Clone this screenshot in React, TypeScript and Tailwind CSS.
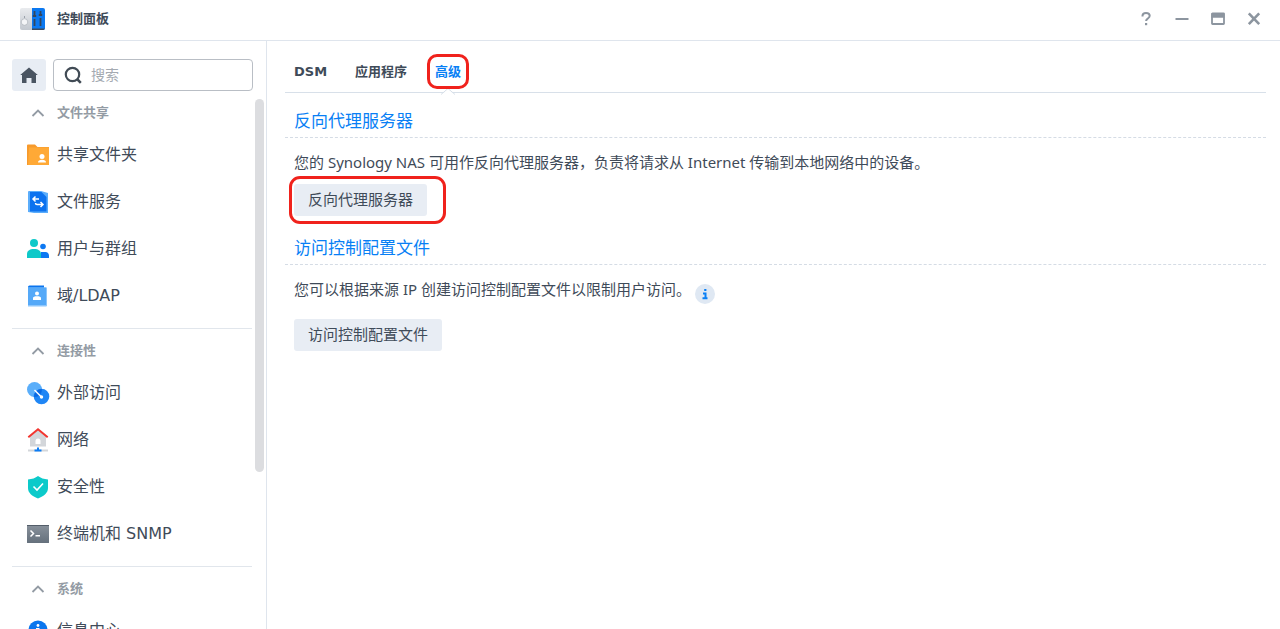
import type { ReactNode } from "react";

const LogoIcon = () => (
  <svg width="26" height="22" viewBox="0 0 26 22" aria-hidden="true">
    <defs>
      <linearGradient id="logoGray" x1="0" y1="0" x2="0" y2="1">
        <stop offset="0" stopColor="#e9ebee" />
        <stop offset="1" stopColor="#c3c8cf" />
      </linearGradient>
    </defs>
    <rect width="14" height="22" rx="2" fill="url(#logoGray)" />
    <path d="M12 0h11a2 2 0 0 1 2 2v18a2 2 0 0 1-2 2H12z" fill="#0b78f0" />
    <path d="M12 20.500h13a2 2 0 0 1-2 1.500H12z" fill="#3d4a5c" />
    <circle cx="4.500" cy="14" r="3.300" fill="#f4f5f7" stroke="#aab0b8" strokeWidth="0.700" />
    <path d="M4.500 8v2" stroke="#9aa1aa" />
    <path d="M14.500 3v5M14.500 11v7M20.500 3v3M20.500 10v8" stroke="#33465e" strokeWidth="1.800" />
    <path d="M12.800 8h3.400M18.800 7h3.400" stroke="#33465e" strokeWidth="1.800" />
  </svg>
);

const FolderIcon = () => (
  <svg width="24" height="24" viewBox="0 0 24 24" aria-hidden="true">
    <path d="M1 2.500A1 1 0 0 1 2 1.500H9L11.500 4H23v18H1z" fill="#f79a2c" />
    <path d="M3 4.500h20v17.500H2z" fill="#ffa936" />
    <circle cx="16" cy="13.500" r="2.500" fill="#fff" />
    <path d="M12 19.500c0-2 1.500-2.800 4-2.800s4 .8 4 2.800z" fill="#fff" />
  </svg>
);

const FileServiceIcon = () => (
  <svg width="24" height="24" viewBox="0 0 24 24" aria-hidden="true">
    <path d="M2 2A1 1 0 0 1 3 1H15l7 2v20H8l-6-1z" fill="#5badfb" />
    <path d="M4 2h11.500l5 5v14.500H4z" fill="#0c72ef" />
    <path
      d="M13 9H7.500M9.500 6.500L7 9l2.500 2.500M11 14.500h6M14.500 12l2.500 2.500-2.500 2.500M11 14.500c-.8 0-1.500-.5-1.500-1.500"
      fill="none"
      stroke="#fff"
      strokeWidth="1.500"
    />
  </svg>
);

const UsersIcon = () => (
  <svg width="24" height="24" viewBox="0 0 24 24" aria-hidden="true">
    <circle cx="8" cy="6" r="4" fill="#0ec9c9" />
    <circle cx="17" cy="9.500" r="2.800" fill="#0c78f2" />
    <path d="M1 21v-4c0-3 2.500-5 7-5s7 2 7 5v4z" fill="#0ec9c9" />
    <path d="M15 15v6h8v-2c0-2.500-1.500-4-3.500-4z" fill="#0c78f2" />
  </svg>
);

const LdapIcon = () => (
  <svg width="24" height="24" viewBox="0 0 24 24" aria-hidden="true">
    <path d="M2 3A1.500 1.500 0 0 1 3.500 1.500H18v3H2z" fill="#0b74ee" />
    <path d="M2 3.500h19V21.500a1 1 0 0 1-1 1H2z" fill="#8dc6fb" />
    <path d="M2 3.500h18v17.500H2z" fill="#55a9f8" />
    <circle cx="11" cy="9.500" r="2" fill="#fff" />
    <path d="M7 16v-2c0-1.200 1.500-1.700 4-1.700s4 .5 4 1.700v2z" fill="#fff" />
  </svg>
);

const ExternalIcon = () => (
  <svg width="24" height="24" viewBox="0 0 24 24" aria-hidden="true">
    <circle cx="8.500" cy="8.500" r="7.500" fill="#5aaefa" />
    <circle cx="15.500" cy="15.500" r="7.800" fill="#1f86f5" />
    <path d="M8.500 16a7.500 7.500 0 0 0 7.500-8 8 8 0 0 0-8 8z" fill="#0969e4" />
    <path d="M8.500 9l7 7" stroke="#fff" strokeWidth="1.500" />
    <circle cx="15.500" cy="16" r="1.700" fill="#fff" />
  </svg>
);

const NetworkIcon = () => (
  <svg width="24" height="24" viewBox="0 0 24 24" aria-hidden="true">
    <path d="M4 8l8-6 8 6v10.500H4z" fill="#d3d6da" />
    <path d="M2.300 9.300L12 1.300l9.700 8" fill="none" stroke="#f2352f" strokeWidth="2" />
    <path d="M9.500 16v-3a2.500 2.500 0 0 1 5 0v3z" fill="#fff" />
    <path d="M2 22.500h20" stroke="#d3d6da" strokeWidth="2" />
    <path d="M12 19.500v4M8.500 22.500h7" stroke="#0b7cf5" strokeWidth="2" />
  </svg>
);

const SecurityIcon = () => (
  <svg width="24" height="24" viewBox="0 0 24 24" aria-hidden="true">
    <path d="M12 1c2.500 2 6 3.200 10 3.500V13c0 5-4 8-10 10.500C6 21 2 18 2 13V4.500C6 4.200 9.500 3 12 1z" fill="#0ccaca" />
    <path d="M7.500 11.500l3.500 3.500 6-6.500" fill="none" stroke="#fff" strokeWidth="1.600" />
  </svg>
);

const TerminalIcon = () => (
  <svg width="24" height="24" viewBox="0 0 24 24" aria-hidden="true">
    <defs>
      <linearGradient id="termGray" x1="0" y1="0" x2="0" y2="1">
        <stop offset="0" stopColor="#88919b" />
        <stop offset="1" stopColor="#65707c" />
      </linearGradient>
    </defs>
    <rect x="1" y="3" width="22" height="18" rx="0.500" fill="url(#termGray)" />
    <path d="M1 3.500h22" stroke="#535d69" />
    <path d="M4.500 8.500l3 3-3 3M9.500 13.800h4.500" fill="none" stroke="#fff" strokeWidth="1.500" />
  </svg>
);

const InfoCenterIcon = () => (
  <svg width="24" height="24" viewBox="0 0 24 24" aria-hidden="true">
    <circle cx="12" cy="11" r="9.500" fill="#0b76ee" />
    <path d="M10 10h2.500v6.500M9.500 16h5.500" fill="none" stroke="#fff" strokeWidth="2" />
    <circle cx="12" cy="6.500" r="1.400" fill="#fff" />
  </svg>
);

type Item = { label: string; icon: ReactNode };

const groups: { title: string; items: Item[] }[] = [
  {
    title: "文件共享",
    items: [
      { label: "共享文件夹", icon: <FolderIcon /> },
      { label: "文件服务", icon: <FileServiceIcon /> },
      { label: "用户与群组", icon: <UsersIcon /> },
      { label: "域/LDAP", icon: <LdapIcon /> },
    ],
  },
  {
    title: "连接性",
    items: [
      { label: "外部访问", icon: <ExternalIcon /> },
      { label: "网络", icon: <NetworkIcon /> },
      { label: "安全性", icon: <SecurityIcon /> },
      { label: "终端机和 SNMP", icon: <TerminalIcon /> },
    ],
  },
  {
    title: "系统",
    items: [{ label: "信息中心", icon: <InfoCenterIcon /> }],
  },
];

const Header = () => (
  <header className="flex h-[41px] shrink-0 items-center border-b border-[#dfe5ed] pl-5 pr-4 pb-[2px]">
    <LogoIcon />
    <h1 className="ml-[11px] text-[13px] font-bold">控制面板</h1>
    <div className="ml-auto flex gap-4 text-[#8c959f]">
      <button type="button" aria-label="帮助" className="flex size-5 items-center justify-center">
        <svg width="16" height="16" viewBox="0 0 16 16" fill="none" stroke="currentColor" strokeWidth="2">
          <path d="M4.500 5.500V4.800C4.500 3 6 2 8 2s3.700 1 3.700 2.800c0 2.700-3.600 2.700-3.600 5.200" />
          <path d="M8.100 12v2.200" strokeWidth="2.200" />
        </svg>
      </button>
      <button type="button" aria-label="最小化" className="flex size-5 items-center justify-center">
        <svg width="16" height="16" viewBox="0 0 16 16">
          <path d="M1.500 8h13" stroke="currentColor" strokeWidth="2" />
        </svg>
      </button>
      <button type="button" aria-label="最大化" className="flex size-5 items-center justify-center">
        <svg width="16" height="16" viewBox="0 0 16 16" fill="none" stroke="currentColor">
          <rect x="2" y="2.500" width="12" height="10.500" rx="0.500" strokeWidth="1.800" />
          <path d="M1.500 4.500h13" strokeWidth="4.500" />
        </svg>
      </button>
      <button type="button" aria-label="关闭" className="flex size-5 items-center justify-center">
        <svg width="16" height="16" viewBox="0 0 16 16">
          <path d="M2.800 2.300l10.400 10.800M13.200 2.300L2.800 13.100" stroke="currentColor" strokeWidth="2.600" />
        </svg>
      </button>
    </div>
  </header>
);

const Sidebar = () => (
  <aside className="flex w-[267px] shrink-0 flex-col border-r border-[#dfe5ed]">
    <div className="flex shrink-0 gap-[7px] pt-[18px] pl-3 pr-[13px]">
      <button
        type="button"
        aria-label="主页"
        className="flex h-8 w-[34px] items-center justify-center rounded-[3px] bg-[#e8edf4]"
      >
        <svg width="18" height="18" viewBox="0 0 18 18" fill="#4a5562">
          <path d="M9 1.500l8.800 7.500H16v8h-4.500v-5h-5v5H2V9H.2z" />
        </svg>
      </button>
      <label className="flex h-8 min-w-0 flex-1 items-center gap-2 rounded-[4px] border border-[#b9bec5] pl-[9px] pr-2">
        <svg width="20" height="20" viewBox="0 0 20 20" fill="none" stroke="#414b55" strokeWidth="2.200">
          <circle cx="9.500" cy="9.500" r="6.700" />
          <path d="M14 14l3.800 3.800" strokeWidth="2.500" />
        </svg>
        <input
          type="search"
          aria-label="搜索"
          placeholder="搜索"
          className="min-w-0 flex-1 text-sm outline-none placeholder:text-[#a4aab1]"
        />
      </label>
    </div>
    <div className="relative min-h-0 flex-1 overflow-hidden pl-3 pr-[14px]">
      <nav>
        {groups.map((group) => (
          <section key={group.title} className="border-b border-[#e1e6ec] pt-[3px] pb-[9px]">
            <button
              type="button"
              className="flex h-[37px] w-full items-center gap-3 pl-[19px] text-[13px] font-bold text-[#939ba4]"
            >
              <svg width="14" height="14" viewBox="0 0 14 14" fill="none" stroke="currentColor" strokeWidth="1.800">
                <path d="M1.500 10L7 4.500l5.500 5.500" />
              </svg>
              {group.title}
            </button>
            <ul>
              {group.items.map((item) => (
                <li key={item.label}>
                  <a href="#" className="flex h-[47px] items-center gap-[7px] pl-[14px] text-base">
                    {item.icon}
                    {item.label}
                  </a>
                </li>
              ))}
            </ul>
          </section>
        ))}
      </nav>
      <div className="absolute top-2 right-[2px] h-[373px] w-[9px] rounded-full bg-[#dcdde0]" />
    </div>
  </aside>
);

const SectionTitle = ({ children }: { children: ReactNode }) => (
  <h2 className="flex h-[35px] items-center border-b border-dashed border-[#d5dce5] pt-[3px] pl-[9px] text-[17px] text-[#087ff5]">
    {children}
  </h2>
);

const ActionButton = ({ children }: { children: ReactNode }) => (
  <button type="button" className="h-8 rounded-[3px] bg-[#e8edf4] px-[14px] text-[15px]">
    {children}
  </button>
);

const App = () => {
  return (
    <div className="flex h-screen flex-col overflow-hidden bg-white font-['DejaVu_Sans','Noto_Sans_CJK_SC',sans-serif] text-[#3f4b59]">
      <Header />
      <div className="flex min-h-0 flex-1">
        <Sidebar />
        <main className="min-w-0 flex-1 pt-[10px] pl-[18px] pr-[14px]">
          <div
            role="tablist"
            className="flex h-[42px] items-center gap-7 border-b border-[#d8e0e9] pl-[9px] text-[13px] font-bold"
          >
            <button type="button" role="tab" aria-selected="false">
              DSM
            </button>
            <button type="button" role="tab" aria-selected="false">
              应用程序
            </button>
            <button type="button" role="tab" aria-selected="true" className="relative text-[#087ff5]">
              高级
              <svg className="absolute top-[26px] left-[5px]" width="16" height="8" viewBox="0 0 16 8" aria-hidden="true">
                <path d="M0 8l8-7 8 7z" fill="#fff" />
                <path d="M1 6.500l7-6 7 6" fill="none" stroke="#d8e0e9" />
              </svg>
              <span className="absolute -inset-x-[8px] -inset-y-2 rounded-[10px] border-3 border-[#f0221c]" />
            </button>
          </div>

          <section className="pt-[10px]">
            <SectionTitle>反向代理服务器</SectionTitle>
            <p className="pt-[13px] pl-[9px] font-['Noto_Sans','Noto_Sans_CJK_SC',sans-serif] text-[15px] leading-[22px]">
              您的 Synology NAS 可用作反向代理服务器，负责将请求从 Internet 传输到本地网络中的设备。
            </p>
            <div className="relative ml-[9px] mt-[11px] flex w-fit">
              <ActionButton>反向代理服务器</ActionButton>
              <span className="absolute -inset-y-2 -left-[5px] -right-[19px] rounded-[11px] border-3 border-[#f0221c]" />
            </div>
          </section>

          <section className="pt-[14px]">
            <SectionTitle>访问控制配置文件</SectionTitle>
            <div className="flex gap-1 pt-[13px] pl-[9px]">
              <p className="font-['Noto_Sans','Noto_Sans_CJK_SC',sans-serif] text-[15px] leading-[22px]">
                您可以根据来源 IP 创建访问控制配置文件以限制用户访问。
              </p>
              <button
                type="button"
                aria-label="说明"
                className="mt-[6px] flex size-5 items-center justify-center rounded-full bg-[#dfe8f3]"
              >
                <svg width="10" height="12" viewBox="0 0 10 12" fill="none" stroke="#087ff5" strokeWidth="2">
                  <path d="M3 5.500h2.500V10M2.500 10.200h5" />
                  <path d="M4.200 2h2.200" />
                </svg>
              </button>
            </div>
            <div className="ml-[9px] mt-[15px] flex">
              <ActionButton>访问控制配置文件</ActionButton>
            </div>
          </section>
        </main>
      </div>
    </div>
  );
};

export default App;
